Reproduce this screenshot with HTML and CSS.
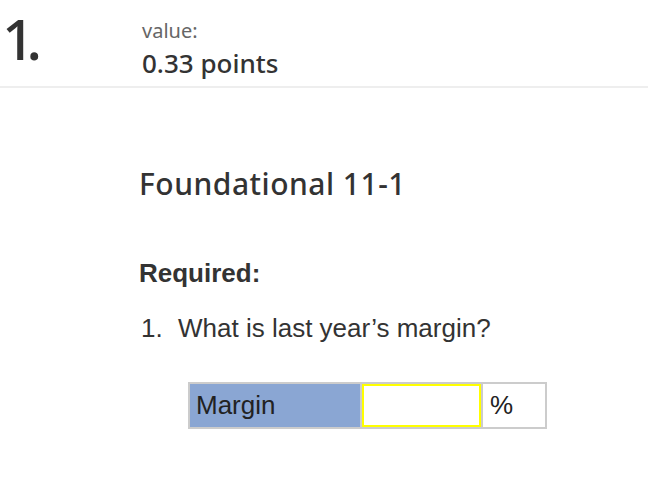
FILE: index.html
```html
<!DOCTYPE html>
<html lang="en">
<head>
<meta charset="utf-8">
<title>Question 1</title>
<link rel="stylesheet" href="styles.css">
</head>
<body>
<header class="q-header">
  <div class="q-number">1.</div>
  <div class="q-value">
    <div class="q-value-label">value:</div>
    <div class="q-value-points">0.33 points</div>
  </div>
</header>
<main class="q-body">
  <h1 class="q-title">Foundational 11-1</h1>
  <h2 class="q-required">Required:</h2>
  <ol class="q-list">
    <li><span class="q-list-num">1.</span><span>What is last year’s margin?</span></li>
  </ol>
  <table class="q-table">
    <tr>
      <td class="cell-label">Margin</td>
      <td class="cell-input"><input class="answer" type="text" aria-label="Margin"></td>
      <td class="cell-unit">%</td>
    </tr>
  </table>
</main>
</body>
</html>
```
FILE: styles.css
```css
html, body {
  margin: 0;
  padding: 0;
  background: #fff;
}
body {
  color: #333;
  font-family: "Liberation Sans", Arial, sans-serif;
}
.q-header {
  display: flex;
  align-items: flex-start;
  height: 86px;
  border-bottom: 2px solid #eeeeee;
  font-family: "Noto Sans", "Open Sans", sans-serif;
}
.q-number {
  font-size: 57px;
  font-weight: 500;
  line-height: 60px;
  padding: 8px 0 0 2px;
  width: 140px;
  color: #333;
  letter-spacing: -8px;
}
.q-value {
  padding-top: 19px;
}
.q-value-label {
  font-size: 20px;
  line-height: 24px;
  color: #666;
}
.q-value-points {
  font-size: 26px;
  line-height: 32px;
  margin-top: 4px;
  font-weight: 500;
  color: #333;
}
.q-body {
  padding-left: 139px;
}
.q-title {
  margin: 78px 0 0 0;
  font-family: "Noto Sans", "Open Sans", sans-serif;
  font-weight: 500;
  font-size: 30px;
  line-height: 36px;
  letter-spacing: 0.5px;
  color: #333;
  font-variant-ligatures: none;
}
.q-required {
  margin: 56px 0 0 0;
  font-size: 26px;
  font-weight: 700;
  line-height: 30px;
  color: #333;
}
.q-list {
  list-style: none;
  margin: 25px 0 0 0;
  padding: 0 0 0 2px;
  font-size: 26px;
  line-height: 30px;
  color: #333;
}
.q-list li {
  display: flex;
}
.q-list-num {
  width: 37px;
}
.q-table {
  margin: 39px 0 0 49px;
  border-collapse: separate;
  border-spacing: 2px;
  background: #cccccc;
  font-size: 26px;
  color: #222;
}
.q-table td {
  height: 43px;
  padding: 0;
  vertical-align: middle;
  background: #fff;
}
.cell-label {
  width: 164px;
  padding-left: 6px !important;
  background: #8aa6d3 !important;
}
.cell-input {
  width: 119px;
}
.answer {
  display: block;
  box-sizing: border-box;
  width: 119px;
  height: 43px;
  margin: 0;
  border: 2px solid #ffff00;
  background: #fff;
  outline: none;
  font: inherit;
}
.cell-unit {
  width: 55px;
  padding-left: 7px !important;
}
```
